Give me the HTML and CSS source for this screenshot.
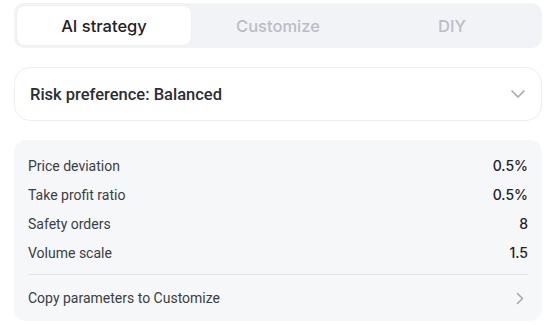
FILE: index.html
```html
<!DOCTYPE html>
<html lang="en">
<head>
<meta charset="UTF-8">
<meta name="viewport" content="width=device-width, initial-scale=1.0">
<title>Bot strategy</title>
<link rel="stylesheet" href="styles.css">
</head>
<body>

<div class="container">
    <div class="tabs">
        <div class="tab active">AI strategy</div>
        <div class="tab">Customize</div>
        <div class="tab">DIY</div>
    </div>

    <div class="select">
        <span>Risk preference: Balanced</span>
        <svg class="chevron-down" width="14" height="8" viewBox="0 0 14 8">
            <path d="M1 1l6 6 6-6" fill="none" stroke="#a3a7ae" stroke-width="1.6" stroke-linecap="round" stroke-linejoin="round"/>
        </svg>
    </div>

    <div class="params">
        <div class="row"><span class="label">Price deviation</span><span class="value">0.5%</span></div>
        <div class="row"><span class="label">Take profit ratio</span><span class="value">0.5%</span></div>
        <div class="row"><span class="label">Safety orders</span><span class="value">8</span></div>
        <div class="row"><span class="label">Volume scale</span><span class="value">1.5</span></div>
        <div class="divider"></div>
        <div class="row copy">
            <span class="label">Copy parameters to Customize</span>
            <svg width="8" height="13" viewBox="0 0 8 13">
                <path d="M1.5 1.5l5 5-5 5" fill="none" stroke="#a3a7ae" stroke-width="1.5" stroke-linecap="round" stroke-linejoin="round"/>
            </svg>
        </div>
    </div>
</div>

</body>
</html>
```

FILE: styles.css
```css
body {
    font-family: Inter, "Noto Sans", sans-serif;
    margin: 0;
    padding: 0;
    background: #fff;
    color: #1f2229;
}

.container {
    padding: 3px 14px;
    display: flex;
    flex-direction: column;
    gap: 19px;
}

.tabs {
    display: grid;
    grid-template-columns: repeat(3, 1fr);
    padding: 3px;
    height: 39px;
    background: #f2f3f7;
    border-radius: 10px;
}

.tab {
    display: flex;
    align-items: center;
    justify-content: center;
    font-size: 16.5px;
    font-weight: 500;
    color: #b9bdc6;
    border-radius: 8px;
}

.tab.active {
    background: #fff;
    color: #1f2229;
    box-shadow: 0 0 2px rgba(0, 0, 0, 0.05);
}

.select {
    display: flex;
    align-items: center;
    justify-content: space-between;
    height: 52px;
    padding: 0 15px;
    border: 1px solid #eceef2;
    border-radius: 16px;
    font-family: Roboto, sans-serif;
    font-size: 16.5px;
    font-weight: 500;
    color: #2a2d33;
}

.chevron-down {
    margin-right: 1px;
}

.params {
    background: #f6f7f9;
    border-radius: 12px;
    padding: 11px 14px 0;
}

.row {
    display: flex;
    align-items: center;
    justify-content: space-between;
    height: 29px;
    font-size: 14px;
}

.label {
    font-family: Roboto, sans-serif;
    font-size: 14px;
    color: #3a3d44;
}

.value {
    font-weight: 500;
    color: #1f2229;
}

.divider {
    height: 1px;
    background: #e2e4e9;
    margin-top: 7px;
}

.row.copy {
    height: 46px;
    padding-right: 4px;
}
```
